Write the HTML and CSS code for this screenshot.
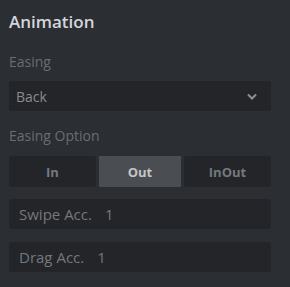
FILE: index.html
```html
<!DOCTYPE html>
<html>
<head>
<meta charset="utf-8">
<link rel="stylesheet" href="styles.css">
</head>
<body>
<div class="panel">
  <h1 class="title">Animation</h1>
  <div class="label label-first">Easing</div>
  <div class="select">
    <span class="select-value">Back</span>
    <svg class="chevron" width="10" height="7" viewBox="0 0 10 7"><path d="M1 1.5 L5 5.5 L9 1.5" fill="none" stroke="#8b8e92" stroke-width="2"/></svg>
  </div>
  <div class="label">Easing Option</div>
  <div class="segmented">
    <div class="seg">In</div>
    <div class="seg seg-active">Out</div>
    <div class="seg">InOut</div>
  </div>
  <div class="field field-first"><span class="field-name">Swipe Acc.</span><span class="field-value">1</span></div>
  <div class="field"><span class="field-name">Drag Acc.</span><span class="field-value">1</span></div>
</div>
</body>
</html>
```
FILE: styles.css
```css
html, body {
  margin: 0;
  padding: 0;
  background: #2b2e33;
}
body {
  width: 290px;
  height: 287px;
  overflow: hidden;
  font-family: "Open Sans", "DejaVu Sans", sans-serif;
}
.panel {
  padding: 0 19px 0 9px;
}
.title {
  margin: 0;
  padding-top: 10px;
  font-size: 17px;
  line-height: 24px;
  font-weight: 600;
  color: #d4d6d9;
}
.label {
  font-size: 14px;
  line-height: 20px;
  color: #6a6d72;
  margin-top: 15px;
}
.label-first {
  margin-top: 18px;
}
.select {
  margin-top: 9px;
  height: 30px;
  background: #232529;
  border-radius: 3px;
  display: flex;
  align-items: center;
  justify-content: space-between;
  padding: 1px 14px 0 7px;
  box-sizing: border-box;
}
.select-value {
  font-size: 14px;
  color: #888b8f;
}
.chevron {
  display: block;
}
.segmented {
  margin-top: 10px;
  display: flex;
  gap: 3px;
  height: 31px;
}
.seg {
  flex: 87 1 0;
  background: #232529;
  border-radius: 3px;
  display: flex;
  align-items: center;
  justify-content: center;
  font-size: 13px;
  font-weight: 700;
  color: #75787c;
}
.seg-active {
  flex-grow: 82;
  background: #4a4d52;
  color: #c3c5c8;
  border-radius: 0;
}
.field {
  margin-top: 13px;
  height: 30px;
  background: #232529;
  border-radius: 3px;
  display: flex;
  align-items: center;
  padding-left: 10px;
  font-size: 15px;
  color: #75787c;
  gap: 13px;
}
.field-first {
  margin-top: 12px;
}
```
